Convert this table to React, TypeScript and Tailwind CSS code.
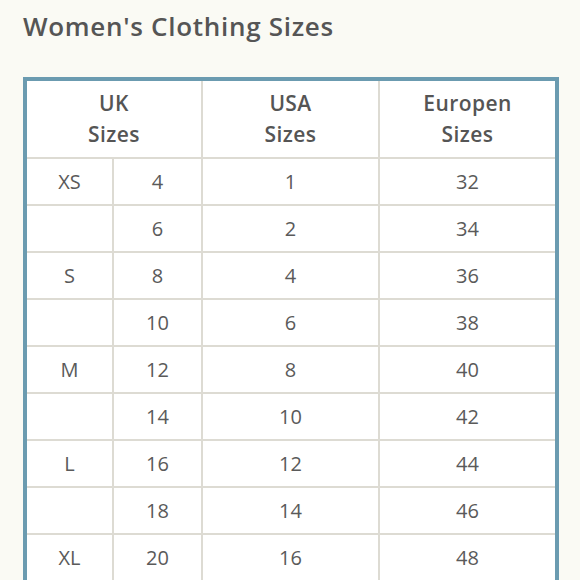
const rows: [string, string, string, string][] = [
  ["XS", "4", "1", "32"],
  ["", "6", "2", "34"],
  ["S", "8", "4", "36"],
  ["", "10", "6", "38"],
  ["M", "12", "8", "40"],
  ["", "14", "10", "42"],
  ["L", "16", "12", "44"],
  ["", "18", "14", "46"],
  ["XL", "20", "16", "48"],
];

const cell = "flex items-center justify-center border-[#dddbd3]";

export default function App() {
  return (
    <div className="w-[580px] h-[580px] overflow-hidden bg-[#fafaf4] text-[#555555] font-['Open_Sans',sans-serif]">
      <h1 className="pl-[23px] pt-[9px] text-[26px] font-semibold leading-[34px] tracking-[0.7px]">
        Women's Clothing Sizes
      </h1>
      <div className="ml-[23px] mt-[34px] w-[536px] border-[4px] border-[#6b9bb0] bg-white">
        <div className="grid grid-cols-[176px_177px_175px] h-[76px] text-[21px] font-semibold leading-[31px] tracking-[0.4px]">
          <div className={`${cell} flex-col border-r-2`}>
            <span>UK</span>
            <span>Sizes</span>
          </div>
          <div className={`${cell} flex-col border-r-2`}>
            <span>USA</span>
            <span>Sizes</span>
          </div>
          <div className={`${cell} flex-col`}>
            <span>Europen</span>
            <span>Sizes</span>
          </div>
        </div>
        {rows.map((r, i) => (
          <div
            key={i}
            className="grid grid-cols-[87px_89px_177px_175px] h-[47px] border-t-2 border-[#dddbd3] text-[20px] text-[#5a5a5a]"
          >
            <div className={`${cell} border-r-2`}>{r[0]}</div>
            <div className={`${cell} border-r-2`}>{r[1]}</div>
            <div className={`${cell} border-r-2`}>{r[2]}</div>
            <div className={cell}>{r[3]}</div>
          </div>
        ))}
      </div>
    </div>
  );
}
